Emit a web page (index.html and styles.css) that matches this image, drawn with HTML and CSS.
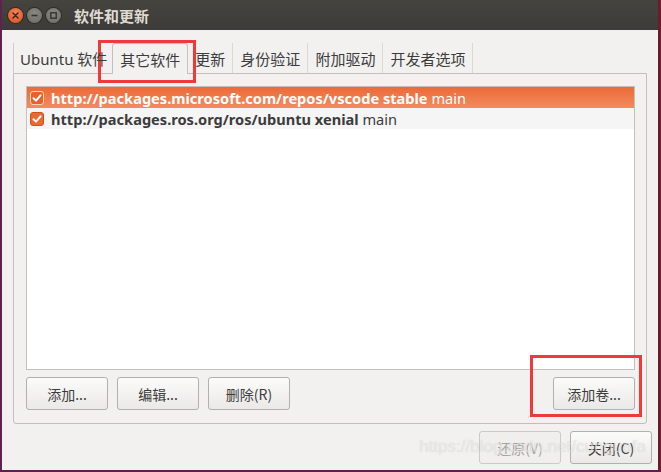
FILE: index.html
```html
<!DOCTYPE html>
<html lang="zh-CN">
<head>
<meta charset="utf-8">
<title>软件和更新</title>
<link rel="stylesheet" href="styles.css">
</head>
<body>
<div class="window">
  <div class="titlebar">
    <div class="wbtns">
      <span class="wbtn close"><svg width="15" height="15" viewBox="0 0 15 15"><path d="M5 5 L10 10 M10 5 L5 10" stroke="#3c2a20" stroke-width="1.6" stroke-linecap="round"/></svg></span>
      <span class="wbtn"><svg width="15" height="15" viewBox="0 0 15 15"><path d="M4.5 7.5 H10.5" stroke="#35332f" stroke-width="1.6"/></svg></span>
      <span class="wbtn"><svg width="15" height="15" viewBox="0 0 15 15"><rect x="4.8" y="4.8" width="5.4" height="5.4" fill="none" stroke="#35332f" stroke-width="1.4"/></svg></span>
    </div>
    <div class="title">软件和更新</div>
  </div>
  <div class="content">
    <div class="notebook">
      <div class="tabs">
        <div class="tab first">Ubuntu 软件</div>
        <div class="tab active">其它软件</div>
        <div class="tab">更新</div>
        <div class="tab">身份验证</div>
        <div class="tab">附加驱动</div>
        <div class="tab">开发者选项</div>
      </div>
      <div class="frame">
        <div class="list">
          <div class="row selected">
            <span class="check"><svg width="14" height="14" viewBox="0 0 14 14"><rect x="0.5" y="0.5" width="13" height="13" rx="2.5" fill="#e8622c" stroke="#fbd2bd"/><path d="M3.5 7.2 L6 9.6 L10.6 4.3" fill="none" stroke="#fff" stroke-width="2" stroke-linecap="round" stroke-linejoin="round"/></svg></span>
            <span class="src"><b>http://packages.microsoft.com/repos/vscode stable</b> main</span>
          </div>
          <div class="row alt">
            <span class="check"><svg width="14" height="14" viewBox="0 0 14 14"><rect x="0.5" y="0.5" width="13" height="13" rx="2.5" fill="#ea6a34" stroke="#c9521f"/><path d="M3.5 7.2 L6 9.6 L10.6 4.3" fill="none" stroke="#fff" stroke-width="2" stroke-linecap="round" stroke-linejoin="round"/></svg></span>
            <span class="src"><b>http://packages.ros.org/ros/ubuntu xenial</b> main</span>
          </div>
        </div>
        <div class="btnrow">
          <button class="btn">添加...</button>
          <button class="btn">编辑...</button>
          <button class="btn">删除(R)</button>
          <span class="spacer"></span>
          <button class="btn">添加卷...</button>
        </div>
      </div>
    </div>
    <div class="actions">
      <button class="btn disabled">还原(V)</button>
      <button class="btn">关闭(C)</button>
    </div>
  </div>
  <div class="mark mark-tab"></div>
  <div class="mark mark-btn"></div>
  <div class="watermark">https://blog.csdn.net/cunguafa</div>
</div>
</body>
</html>
```

FILE: styles.css
```css
* { box-sizing: border-box; }
html, body { margin: 0; padding: 0; background: #5e2750; }
body { width: 661px; height: 472px; overflow: hidden; font-family: "Noto Sans", "Noto Sans CJK SC", sans-serif; }

.window {
  position: relative;
  width: 661px;
  height: 472px;
  display: flex;
  flex-direction: column;
  border-left: 2px solid #5f2152;
  border-right: 3px solid #6a1d2c;
  border-bottom: 2px solid #5c1f4f;
  background: #f2f1f0;
}

.titlebar {
  height: 30px;
  flex: none;
  display: flex;
  align-items: center;
  background: linear-gradient(#45443f, #3c3b37);
  padding-left: 6px;
}
.wbtns { display: flex; gap: 4px; }
.wbtn {
  width: 15px; height: 15px; border-radius: 50%;
  background: radial-gradient(circle at 50% 35%, #8a8882, #6b6963);
  box-shadow: 0 0 0 1px #2e2d2a;
  display: flex;
}
.wbtn.close { background: radial-gradient(circle at 50% 35%, #f5875a, #de4b17); }
.title {
  margin-left: 13px;
  color: #dfdbd2;
  font-size: 15px;
  font-weight: bold;
  font-family: "Noto Sans CJK SC", sans-serif;
}

.content {
  flex: 1;
  display: flex;
  flex-direction: column;
  padding: 13px 6px 0 11px;
  color: #3c3c3c;
}

.notebook { margin-right: 5px; display: flex; flex-direction: column; }
.tabs { display: flex; height: 30px; font-size: 15px; position: relative; z-index: 1; }
.tab {
  flex: none;
  height: 30px;
  padding: 0 7px;
  display: flex;
  align-items: center;
  white-space: nowrap;
  border-right: 1px solid #dcd8d3;
  color: #3c3c3c;
  font-family: "Noto Sans", "Noto Sans CJK SC", sans-serif;
}
.tab.first { border-left: 1px solid #cfcbc6; border-right: none; padding-left: 6px; padding-right: 5px; }
.tab.active {
  height: 31px;
  border: 1px solid #c3bfba;
  border-bottom: none;
  border-radius: 3px 3px 0 0;
  background: #f2f1f0;
  padding: 1px 7px 0 7px;
}

.frame {
  height: 351px;
  border: 1px solid #c3bfba;
  border-radius: 0 0 3px 3px;
  padding: 12px 11px 13px 12px;
  display: flex;
  flex-direction: column;
  gap: 7px;
}
.list {
  height: 284px;
  border: 1px solid #c3bfba;
  background: #fff;
}
.row {
  height: 21px;
  display: flex;
  align-items: center;
  padding-left: 3px;
  gap: 7px;
  font-size: 14.6px;
  color: #3c3c3c;
  white-space: nowrap;
}
.row.selected { background: linear-gradient(#ec6a38, #f38b5e); color: #fff; }
.row.alt { background: #f5f5f5; }
.check { display: flex; }
.src { line-height: 20px; }
.src b { font-weight: bold; }

.btnrow { display: flex; gap: 9px; height: 33px; }
.spacer { flex: 1; }
.btn {
  width: 82px;
  height: 33px;
  border: 1px solid #b3afaa;
  border-radius: 3px;
  background: linear-gradient(#fbfbfa, #ebe9e7);
  font-family: "Noto Sans CJK SC", sans-serif;
  font-size: 14px;
  color: #3c3c3c;
  padding: 0;
}
.btn.disabled { color: #a7a39e; border-color: #cdc9c4; background: #f0efee; }

.actions {
  display: flex;
  justify-content: flex-end;
  gap: 9px;
  margin-top: 7px;
}

.mark {
  position: absolute;
  border: 3px solid #f03a3a;
  pointer-events: none;
}
.mark-tab { left: 96px; top: 40px; width: 98px; height: 43px; }
.mark-btn { left: 528px; top: 355px; width: 112px; height: 62px; }

.watermark {
  position: absolute;
  right: 12px;
  top: 437px;
  font-family: "Liberation Sans", sans-serif;
  font-size: 17px;
  color: rgba(255,255,255,0.55);
  text-shadow: 0 0 1px rgba(120,120,120,0.35);
  pointer-events: none;
}
```
